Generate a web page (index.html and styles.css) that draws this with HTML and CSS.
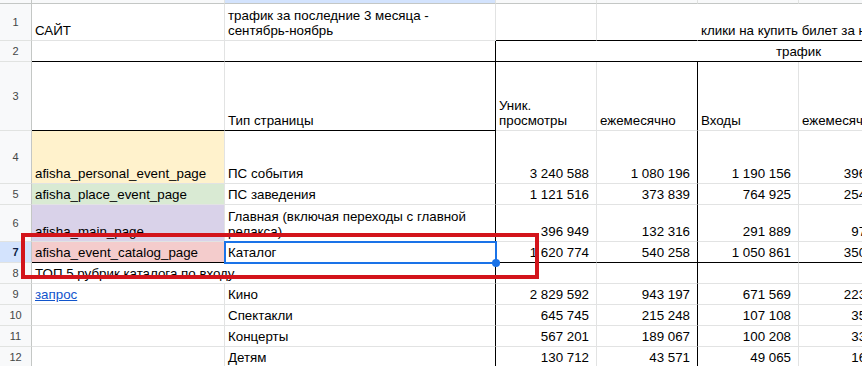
FILE: index.html
```html
<!DOCTYPE html>
<html lang="ru">
<head>
<meta charset="utf-8">
<title>Sheet</title>
<link rel="stylesheet" href="styles.css">
</head>
<body>
<div class="sheet">
  <div class="grid">
    <!-- header strip -->
    <div class="corner"></div>
    <div class="ch"></div>
    <div class="ch ch-sel"></div>
    <div class="ch"></div>
    <div class="ch"></div>
    <div class="ch"></div>
    <div class="ch"></div>
    <div class="ch"></div>
    <div class="ch"></div>

    <!-- row 1 -->
    <div class="rh">1</div>
    <div class="c">САЙТ</div>
    <div class="c wrap"><span>трафик за последние 3 месяца - <span class="nb">сентябрь-ноябрь</span></span></div>
    <div class="c bb"></div>
    <div class="c bb no-r"></div>
    <div class="c bb span4">клики на купить билет за ноябрь</div>

    <!-- row 2 -->
    <div class="rh">2</div>
    <div class="c bb"></div>
    <div class="c bb br"></div>
    <div class="c bb span6 center">трафик</div>

    <!-- row 3 -->
    <div class="rh">3</div>
    <div class="c bb"></div>
    <div class="c bb br">Тип страницы</div>
    <div class="c wrap"><span>Уник. просмотры</span></div>
    <div class="c br">ежемесячно</div>
    <div class="c">Входы</div>
    <div class="c">ежемесячно</div>
    <div class="c"></div>
    <div class="c"></div>

    <!-- row 4 -->
    <div class="rh">4</div>
    <div class="c fill-yellow">afisha_personal_event_page</div>
    <div class="c br">ПС события</div>
    <div class="c num">3 240 588</div>
    <div class="c num br">1 080 196</div>
    <div class="c num">1 190 156</div>
    <div class="c num">396 719</div>
    <div class="c"></div>
    <div class="c"></div>

    <!-- row 5 -->
    <div class="rh">5</div>
    <div class="c fill-green">afisha_place_event_page</div>
    <div class="c br">ПС заведения</div>
    <div class="c num">1 121 516</div>
    <div class="c num br">373 839</div>
    <div class="c num">764 925</div>
    <div class="c num">254 975</div>
    <div class="c"></div>
    <div class="c"></div>

    <!-- row 6 -->
    <div class="rh">6</div>
    <div class="c fill-purple">afisha_main_page</div>
    <div class="c br wrap"><span>Главная (включая переходы с главной релакса)</span></div>
    <div class="c num">396 949</div>
    <div class="c num br">132 316</div>
    <div class="c num">291 889</div>
    <div class="c num">97 296</div>
    <div class="c"></div>
    <div class="c"></div>

    <!-- row 7 -->
    <div class="rh rh-sel">7</div>
    <div class="c bb fill-pink">afisha_event_catalog_page</div>
    <div class="c bb br">Каталог</div>
    <div class="c bb num">1 620 774</div>
    <div class="c bb num br">540 258</div>
    <div class="c bb num">1 050 861</div>
    <div class="c bb num">350 287</div>
    <div class="c bb"></div>
    <div class="c bb"></div>

    <!-- row 8 -->
    <div class="rh">8</div>
    <div class="c br span2">ТОП 5 рубрик каталога по входу</div>
    <div class="c"></div>
    <div class="c br"></div>
    <div class="c"></div>
    <div class="c"></div>
    <div class="c"></div>
    <div class="c"></div>

    <!-- row 9 -->
    <div class="rh">9</div>
    <div class="c"><a class="link" href="#">запрос</a></div>
    <div class="c br">Кино</div>
    <div class="c num">2 829 592</div>
    <div class="c num br">943 197</div>
    <div class="c num">671 569</div>
    <div class="c num">223 856</div>
    <div class="c"></div>
    <div class="c"></div>

    <!-- row 10 -->
    <div class="rh">10</div>
    <div class="c"></div>
    <div class="c br">Спектакли</div>
    <div class="c num">645 745</div>
    <div class="c num br">215 248</div>
    <div class="c num">107 108</div>
    <div class="c num">35 703</div>
    <div class="c"></div>
    <div class="c"></div>

    <!-- row 11 -->
    <div class="rh">11</div>
    <div class="c"></div>
    <div class="c br">Концерты</div>
    <div class="c num">567 201</div>
    <div class="c num br">189 067</div>
    <div class="c num">100 208</div>
    <div class="c num">33 403</div>
    <div class="c"></div>
    <div class="c"></div>

    <!-- row 12 -->
    <div class="rh">12</div>
    <div class="c"></div>
    <div class="c br">Детям</div>
    <div class="c num">130 712</div>
    <div class="c num br">43 571</div>
    <div class="c num">49 065</div>
    <div class="c num">16 355</div>
    <div class="c"></div>
    <div class="c"></div>
  </div>

  <div class="selection"><span class="handle"></span></div>
  <div class="annot"></div>
</div>
</body>
</html>
```

FILE: styles.css
```css
html, body {
  margin: 0;
  padding: 0;
  background: #ffffff;
  overflow: hidden;
}

.sheet {
  position: relative;
  width: 862px;
  height: 366px;
  overflow: hidden;
  font-family: "Liberation Sans", Arial, sans-serif;
  font-size: 13.333px;
  color: #000000;
}

.grid {
  display: grid;
  grid-template-columns: 32px 193px 271px 101px 101px 101px 101px 101px 101px;
  grid-template-rows: 4px 37px 21px 69px 53px 21px 37px 21px 21px 21px 21px 21px 21px;
  width: max-content;
}

.corner,
.ch {
  background: #f8f9fa;
  border-right: 1px solid #c4c7c5;
  border-bottom: 1px solid #c4c7c5;
  box-sizing: border-box;
}

.ch {
  border-right-color: #e1e3e1;
}

.ch-sel {
  background: #d3e3fd;
}

.rh {
  background: #f8f9fa;
  border-right: 1px solid #c4c7c5;
  border-bottom: 1px solid #e1e3e1;
  box-sizing: border-box;
  display: flex;
  align-items: center;
  justify-content: center;
  font-size: 11px;
  color: #444746;
}

.rh-sel {
  background: #d3e3fd;
  color: #0b1f44;
  font-weight: bold;
}

.c {
  box-sizing: border-box;
  border-right: 1px solid #e2e3e3;
  border-bottom: 1px solid #e2e3e3;
  display: flex;
  align-items: flex-end;
  padding: 0 3px 2px 3px;
  white-space: nowrap;
  overflow: hidden;
  min-width: 0;
  line-height: 15px;
}

.wrap {
  white-space: normal;
}

.nb {
  white-space: nowrap;
}

.num {
  justify-content: flex-end;
  padding-right: 7px;
}

.center {
  justify-content: center;
}

.bb {
  border-bottom-color: #000000;
}

.br {
  border-right-color: #000000;
}

.no-r {
  border-right-color: transparent;
}

.span2 {
  grid-column: span 2;
}

.span4 {
  grid-column: span 4;
}

.span6 {
  grid-column: span 6;
}

.fill-yellow {
  background: #fff2cc;
}

.fill-green {
  background: #d9ead3;
}

.fill-purple {
  background: #d9d2e9;
}

.fill-pink {
  background: #f4cccc;
}

.link {
  color: #1155cc;
  text-decoration: underline;
}

.selection {
  position: absolute;
  left: 224px;
  top: 241px;
  width: 273px;
  height: 23px;
  border: 2px solid #1a73e8;
  box-sizing: border-box;
}

.handle {
  position: absolute;
  right: -5px;
  bottom: -5px;
  width: 8px;
  height: 8px;
  border-radius: 50%;
  background: #1a73e8;
}

.annot {
  position: absolute;
  left: 21px;
  top: 233px;
  width: 518px;
  height: 46px;
  border: 4px solid #d3141b;
  box-sizing: border-box;
}
```
